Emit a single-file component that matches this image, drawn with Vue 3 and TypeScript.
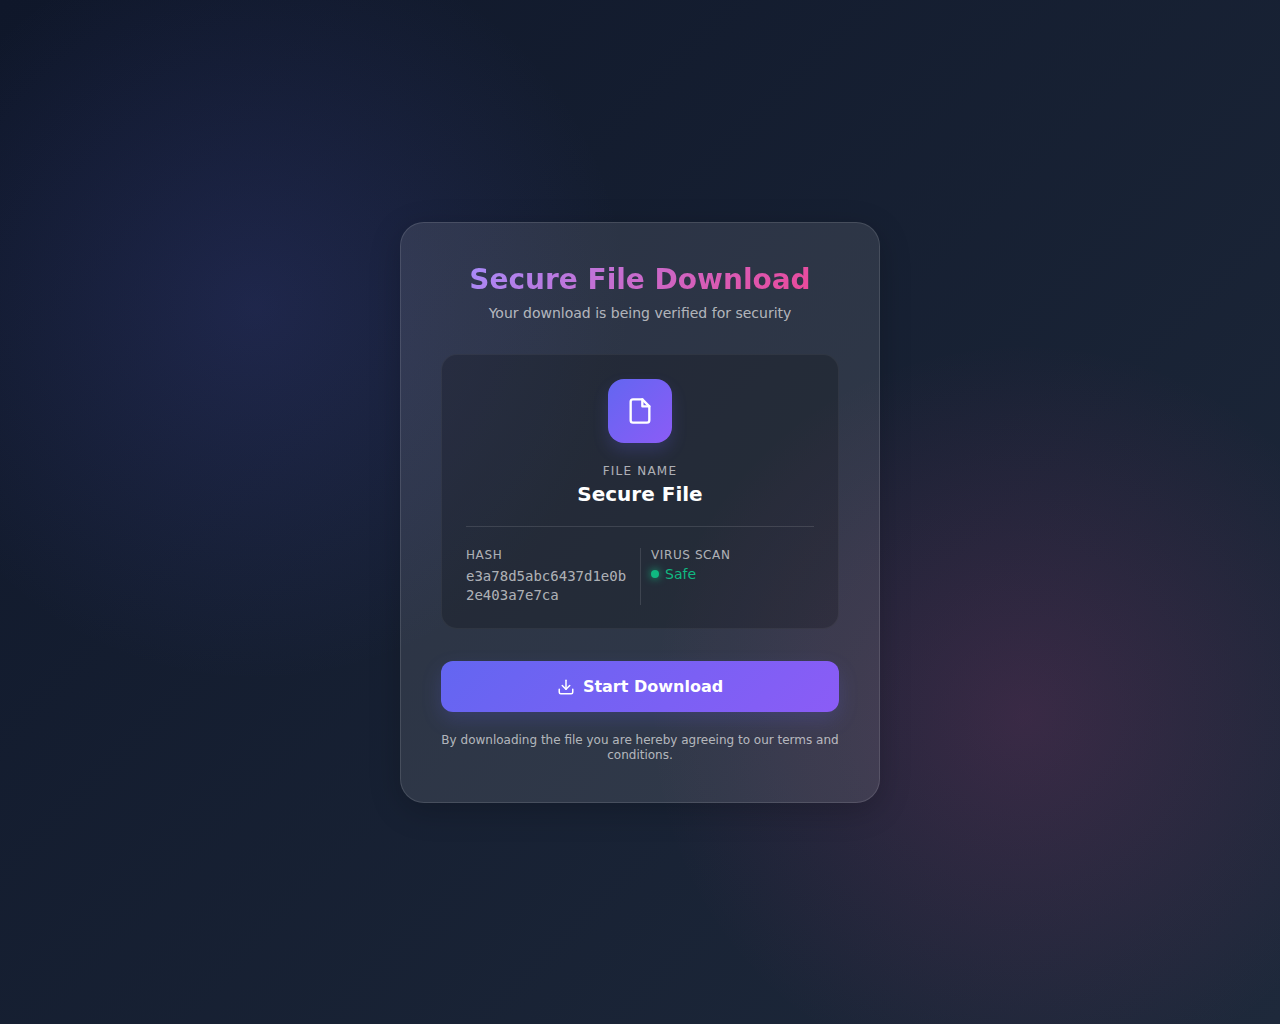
<script setup lang="ts">
interface FileInfo {
  name: string
  hash: string
  status: string
}

const file: FileInfo = {
  name: 'Secure File',
  hash: 'e3a78d5abc6437d1e0b2e403a7e7ca',
  status: 'Safe',
}
</script>

<template>
  <main class="page">
    <section class="card">
      <header class="header">
        <h1 class="title">Secure File Download</h1>
        <p class="subtitle">Your download is being verified for security</p>
      </header>

      <div class="panel">
        <div class="file">
          <div class="file-icon">
            <svg width="28" height="28" viewBox="0 0 24 24" fill="none" stroke="currentColor" stroke-width="2" stroke-linecap="round" stroke-linejoin="round" aria-hidden="true">
              <path d="M14 2H6a2 2 0 0 0-2 2v16a2 2 0 0 0 2 2h12a2 2 0 0 0 2-2V8z" />
              <polyline points="14 2 14 8 20 8" />
            </svg>
          </div>
          <p class="label wide">File Name</p>
          <h2 class="file-name">{{ file.name }}</h2>
        </div>

        <dl class="details">
          <div class="detail">
            <dt class="label">Hash</dt>
            <dd class="hash">{{ file.hash }}</dd>
          </div>
          <div class="detail">
            <dt class="label">Virus Scan</dt>
            <dd class="status"><span class="dot"></span>{{ file.status }}</dd>
          </div>
        </dl>
      </div>

      <button class="download" type="button">
        <svg width="18" height="18" viewBox="0 0 24 24" fill="none" stroke="currentColor" stroke-width="2" stroke-linecap="round" stroke-linejoin="round" aria-hidden="true">
          <path d="M21 15v4a2 2 0 0 1-2 2H5a2 2 0 0 1-2-2v-4" />
          <polyline points="7 10 12 15 17 10" />
          <line x1="12" y1="15" x2="12" y2="3" />
        </svg>
        Start Download
      </button>

      <p class="terms">By downloading the file you are hereby agreeing to our terms and conditions.</p>
    </section>
  </main>
</template>

<style>
body {
  margin: 0;
  background: #0f172a;
}
</style>

<style scoped>
.page {
  box-sizing: border-box;
  min-height: 100vh;
  display: flex;
  align-items: center;
  justify-content: center;
  padding: 20px;
  font-family: "DejaVu Sans", sans-serif;
  color: #fff;
  background:
    radial-gradient(circle at 20% 30%, rgba(99, 102, 241, 0.15), transparent 30%),
    radial-gradient(circle at 80% 70%, rgba(236, 72, 153, 0.15), transparent 30%),
    linear-gradient(135deg, #0f172a, #1e293b);
}

.card {
  box-sizing: border-box;
  width: 100%;
  max-width: 480px;
  padding: 40px 40px 39px;
  border: 1px solid rgba(255, 255, 255, 0.12);
  border-radius: 24px;
  background: rgba(255, 255, 255, 0.1);
  box-shadow: 0 8px 32px rgba(0, 0, 0, 0.2);
  text-align: center;
}

h1,
h2,
p,
dl,
dd {
  margin: 0;
}

.header {
  margin-bottom: 32px;
}

.title {
  width: fit-content;
  margin: 0 auto 8px;
  font-size: 28px;
  line-height: 33px;
  font-weight: 700;
  color: transparent;
  background: linear-gradient(135deg, #a78bfa, #ec4899);
  background-clip: text;
}

.subtitle {
  font-size: 14px;
  line-height: 18px;
  color: rgba(255, 255, 255, 0.65);
}

.panel {
  padding: 24px 24px 23px;
  margin-bottom: 32px;
  border: 1px solid rgba(255, 255, 255, 0.05);
  border-radius: 16px;
  background: rgba(0, 0, 0, 0.2);
}

.file {
  padding-bottom: 20px;
  border-bottom: 1px solid rgba(255, 255, 255, 0.12);
}

.file-icon {
  display: flex;
  align-items: center;
  justify-content: center;
  width: 64px;
  height: 64px;
  margin: 0 auto 21px;
  border-radius: 16px;
  background: linear-gradient(135deg, #6366f1, #8b5cf6);
  box-shadow: 0 8px 16px rgba(99, 102, 241, 0.2);
}

.label {
  font-size: 12px;
  line-height: 14px;
  letter-spacing: 0.05em;
  text-transform: uppercase;
  color: rgba(255, 255, 255, 0.65);
}

.wide {
  margin-bottom: 4px;
  letter-spacing: 0.1em;
}

.file-name {
  font-size: 20px;
  line-height: 24px;
  font-weight: 600;
}

.details {
  display: grid;
  grid-template-columns: 1fr 1fr;
  margin-top: 21px;
  text-align: left;
}

.detail + .detail {
  padding-left: 10px;
  border-left: 1px solid rgba(255, 255, 255, 0.12);
}

.hash {
  margin-top: 5px;
  padding-right: 10px;
  font-family: "DejaVu Sans Mono", monospace;
  font-size: 14px;
  line-height: 19px;
  color: rgba(255, 255, 255, 0.65);
  word-break: break-all;
}

.status {
  display: flex;
  align-items: center;
  gap: 6px;
  margin-top: 4px;
  font-size: 14px;
  line-height: 16px;
  color: #10b981;
}

.dot {
  width: 8px;
  height: 8px;
  border-radius: 50%;
  background: #10b981;
  box-shadow: 0 0 8px #10b981;
}

.download {
  display: flex;
  align-items: flex-end;
  justify-content: center;
  gap: 8px;
  width: 100%;
  padding: 16px;
  border: 0;
  border-radius: 12px;
  font: 600 16px/19px "DejaVu Sans", sans-serif;
  color: #fff;
  background: linear-gradient(135deg, #6366f1, #8b5cf6);
  box-shadow: 0 8px 20px rgba(99, 102, 241, 0.2);
  cursor: pointer;
}

.terms {
  margin-top: 21px;
  font-size: 12px;
  line-height: 15px;
  color: rgba(255, 255, 255, 0.65);
}
</style>
